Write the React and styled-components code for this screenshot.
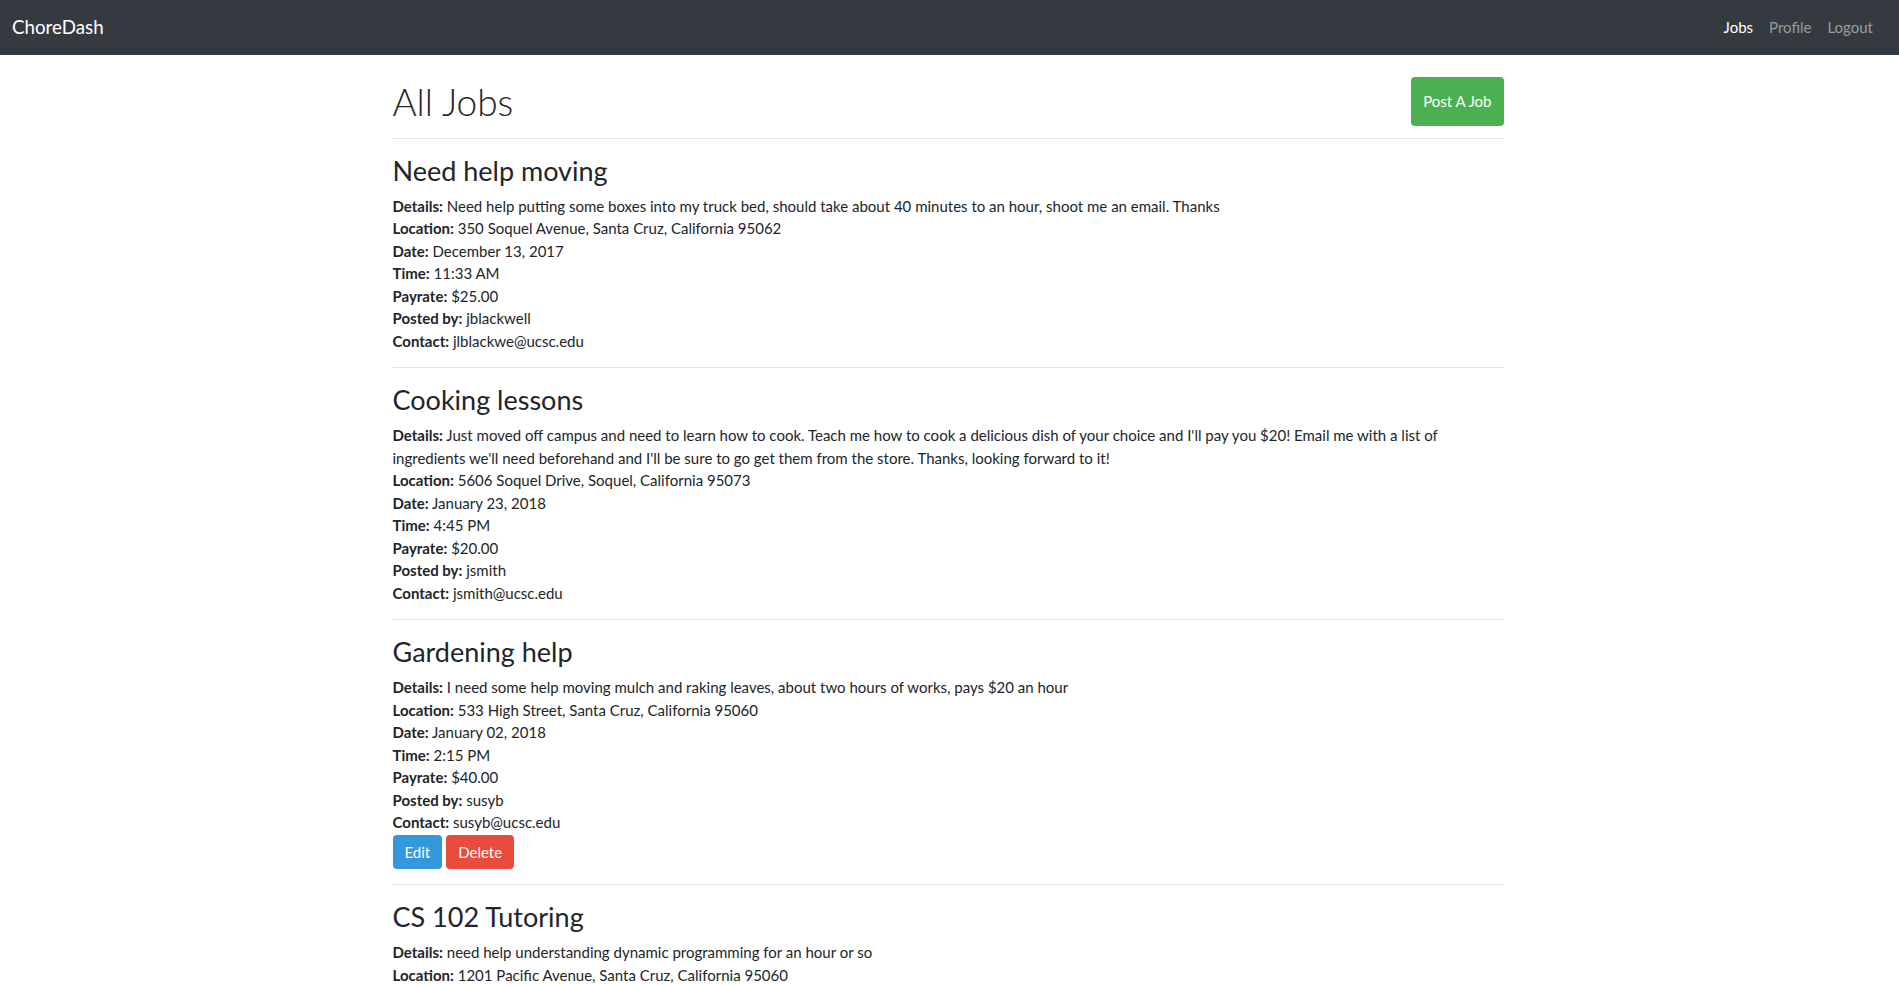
import React from 'react';
import styled, { createGlobalStyle } from 'styled-components';

const GlobalStyle = createGlobalStyle`
  body {
    margin: 0;
    font-family: Lato, "Liberation Sans", sans-serif;
    font-size: 15px;
    line-height: 1.5;
    color: #212529;
    background: #fff;
  }
`;

const Navbar = styled.nav`
  display: flex;
  align-items: center;
  justify-content: space-between;
  background-color: #343a40;
  padding: 8px 18px 8px 12px;
`;

const Brand = styled.a`
  font-size: 18.75px;
  line-height: 28px;
  color: #fff;
  text-decoration: none;
`;

const NavList = styled.div`
  display: flex;
`;

const NavLink = styled.a`
  padding: 8px;
  line-height: 22.5px;
  color: ${({ active }) => (active ? '#fff' : 'rgba(255, 255, 255, 0.5)')};
  text-decoration: none;
`;

const Container = styled.main`
  width: 1111px;
  margin-left: calc(50% - 557px);
`;

const PageHeader = styled.div`
  display: flex;
  align-items: center;
  justify-content: space-between;
  padding-top: 22px;
`;

const PageTitle = styled.h1`
  margin: 0;
  font-size: 37px;
  font-weight: 300;
  line-height: 50px;
`;

const Button = styled.button`
  font-family: inherit;
  font-size: 15px;
  line-height: 22.5px;
  color: #fff;
  border: none;
  border-radius: 4px;
  padding: ${({ large }) => (large ? '13px 12px' : '6px 12px')};
  background-color: ${({ variant }) =>
    ({ success: '#4caf50', info: '#3498db', danger: '#e74c3c' }[variant])};
  cursor: pointer;
`;

const Divider = styled.hr`
  margin: 15px 0 16px;
  border: 0;
  border-top: 1px solid rgba(0, 0, 0, 0.1);
`;

const HeaderDivider = styled(Divider)`
  margin-top: 11px;
`;

const JobTitle = styled.h3`
  margin: 0 0 7.7px;
  font-size: 27px;
  font-weight: 400;
  line-height: 1.2;
`;

const Line = styled.div`
  line-height: 22.5px;
`;

const Actions = styled.div`
  display: flex;
  gap: 4px;
  margin-top: 1px;
`;

const jobs = [
  {
    title: 'Need help moving',
    details:
      'Need help putting some boxes into my truck bed, should take about 40 minutes to an hour, shoot me an email. Thanks',
    location: '350 Soquel Avenue, Santa Cruz, California 95062',
    date: 'December 13, 2017',
    time: '11:33 AM',
    payrate: '$25.00',
    postedBy: 'jblackwell',
    contact: 'jlblackwe@ucsc.edu',
  },
  {
    title: 'Cooking lessons',
    details:
      "Just moved off campus and need to learn how to cook. Teach me how to cook a delicious dish of your choice and I'll pay you $20! Email me with a list of ingredients we'll need beforehand and I'll be sure to go get them from the store. Thanks, looking forward to it!",
    location: '5606 Soquel Drive, Soquel, California 95073',
    date: 'January 23, 2018',
    time: '4:45 PM',
    payrate: '$20.00',
    postedBy: 'jsmith',
    contact: 'jsmith@ucsc.edu',
  },
  {
    title: 'Gardening help',
    details:
      'I need some help moving mulch and raking leaves, about two hours of works, pays $20 an hour',
    location: '533 High Street, Santa Cruz, California 95060',
    date: 'January 02, 2018',
    time: '2:15 PM',
    payrate: '$40.00',
    postedBy: 'susyb',
    contact: 'susyb@ucsc.edu',
    owner: true,
  },
  {
    title: 'CS 102 Tutoring',
    details: 'need help understanding dynamic programming for an hour or so',
    location: '1201 Pacific Avenue, Santa Cruz, California 95060',
    date: 'December 20, 2017',
    time: '6:00 PM',
    payrate: '$30.00',
    postedBy: 'tkim',
    contact: 'tkim@ucsc.edu',
  },
];

const fields = [
  ['Details', 'details'],
  ['Location', 'location'],
  ['Date', 'date'],
  ['Time', 'time'],
  ['Payrate', 'payrate'],
  ['Posted by', 'postedBy'],
  ['Contact', 'contact'],
];

const JobItem = ({ job }) => (
  <section>
    <JobTitle>{job.title}</JobTitle>
    {fields.map(([label, key]) => (
      <Line key={key}>
        <b>{label}:</b> {job[key]}
      </Line>
    ))}
    {job.owner && (
      <Actions>
        <Button variant="info">Edit</Button>
        <Button variant="danger">Delete</Button>
      </Actions>
    )}
    <Divider />
  </section>
);

const App = () => (
  <>
    <GlobalStyle />
    <Navbar>
      <Brand href="#">ChoreDash</Brand>
      <NavList>
        <NavLink href="#" active>
          Jobs
        </NavLink>
        <NavLink href="#">Profile</NavLink>
        <NavLink href="#">Logout</NavLink>
      </NavList>
    </Navbar>
    <Container>
      <PageHeader>
        <PageTitle>All Jobs</PageTitle>
        <Button variant="success" large>
          Post A Job
        </Button>
      </PageHeader>
      <HeaderDivider />
      {jobs.map((job) => (
        <JobItem key={job.title} job={job} />
      ))}
    </Container>
  </>
);

export default App;
